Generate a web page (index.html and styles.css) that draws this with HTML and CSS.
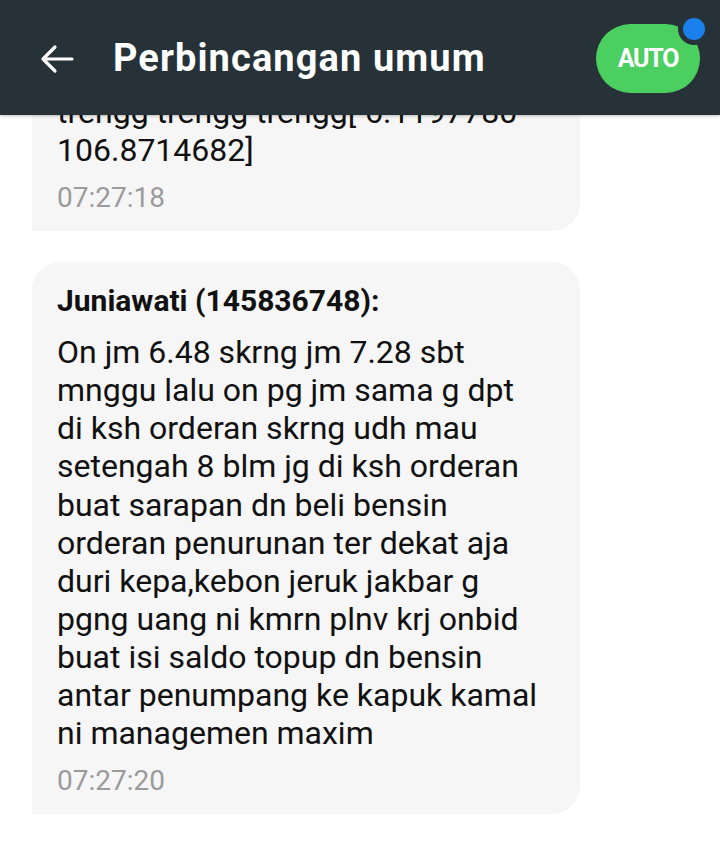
FILE: index.html
```html
<!DOCTYPE html>
<html lang="id">
<head>
<meta charset="utf-8">
<title>Perbincangan umum</title>
<link rel="stylesheet" href="styles.css">
</head>
<body>
<div class="screen">
  <header class="toolbar">
    <button class="back" aria-label="Kembali">
      <svg width="34" height="30" viewBox="0 0 34 30"><path d="M32 15H3M15 3L3 15l12 12" fill="none" stroke="#fff" stroke-width="3.2" stroke-linecap="round" stroke-linejoin="round"/></svg>
    </button>
    <h1 class="title">Perbincangan umum</h1>
    <div class="auto">
      <span class="auto-label">AUTO</span>
      <span class="dot"></span>
    </div>
  </header>
  <main class="chat">
    <div class="bubble first">
      <p class="body">trengg trengg trengg[-6.1197780<br>106.8714682]</p>
      <div class="time">07:27:18</div>
    </div>
    <div class="bubble">
      <div class="name">Juniawati (145836748):</div>
      <p class="body">On jm 6.48 skrng jm 7.28 sbt<br>mnggu lalu on pg jm sama g dpt<br>di ksh orderan skrng udh mau<br>setengah 8 blm jg di ksh orderan<br>buat sarapan dn beli bensin<br>orderan penurunan ter dekat aja<br>duri kepa,kebon jeruk jakbar g<br>pgng uang ni kmrn plnv krj onbid<br>buat isi saldo topup dn bensin<br>antar penumpang ke kapuk kamal<br>ni managemen maxim</p>
      <div class="time">07:27:20</div>
    </div>
  </main>
</div>
</body>
</html>
```
FILE: styles.css
```css
* { box-sizing: border-box; }
html, body { margin: 0; padding: 0; background: #fff; }
body { font-family: Roboto, "Noto Sans", sans-serif; }
.screen { width: 720px; height: 846px; display: flex; flex-direction: column; overflow: hidden; }
.toolbar {
  height: 115px; flex: none; background: #263238;
  display: flex; align-items: center; padding: 0 20px 0 40px;
  position: relative; z-index: 2;
  box-shadow: 0 1px 3px rgba(0,0,0,0.25);
}
.back { background: none; border: 0; padding: 0; width: 34px; height: 30px; display: flex; margin-top: 2px; }
.title {
  margin: 0 0 0 39px; flex: 1; color: #fff;
  font-size: 38px; font-weight: 700; letter-spacing: 1.1px;
}
.auto {
  position: relative; width: 104px; height: 69px; margin-top: 2px;
  background: #4ccf61; border-radius: 35px;
  display: flex; align-items: center; justify-content: center;
}
.auto-label { color: #fff; font-weight: 700; font-size: 25px; letter-spacing: -1.2px; }
.dot {
  position: absolute; right: -10px; top: -11px;
  width: 32px; height: 32px; border-radius: 50%;
  background: #1a80ec; border: 5px solid #263238;
}
.chat { flex: 1; overflow: hidden; padding: 0 140px 0 32px; }
.bubble {
  background: #f6f6f6; border-radius: 28px 28px 28px 0;
  padding: 20px 20px 14px 25px; margin-bottom: 31px;
}
.bubble.first { margin-top: -42px; }
.name { font-size: 30px; font-weight: 700; line-height: 38px; color: #111; margin-bottom: 13px; }
.body { margin: 0; font-size: 32px; line-height: 38.1px; color: #111; }
.time { font-size: 28px; line-height: 38px; color: #9b9b9b; margin-top: 10px; }
```
